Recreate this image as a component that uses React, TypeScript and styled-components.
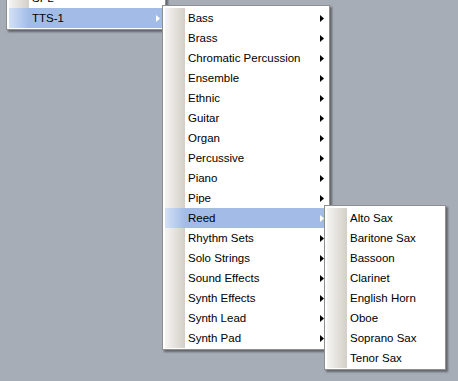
import React from 'react'
import styled, { createGlobalStyle, css } from 'styled-components'

const GlobalStyle = createGlobalStyle`
  html, body {
    margin: 0;
    padding: 0;
    background: #a7adb7;
  }
  body {
    font-family: "Liberation Sans", Arial, sans-serif;
    font-size: 11.5px;
    color: #000;
  }
`

const Desktop = styled.div`
  position: relative;
  width: 458px;
  height: 381px;
  overflow: hidden;
  background: #a7adb7;
`

const Menu = styled.div<{ $left: number; $top: number; $width: number }>`
  position: absolute;
  left: ${(p) => p.$left}px;
  top: ${(p) => p.$top}px;
  width: ${(p) => p.$width}px;
  box-sizing: border-box;
  display: flex;
  flex-direction: column;
  padding: 2px 2px 1px 2px;
  background: #fff;
  border: 1px solid #8f8f8f;
  box-shadow: 2px 2px 2px rgba(0, 0, 0, 0.42);
`

const Item = styled.div<{ $active?: boolean }>`
  display: flex;
  align-items: center;
  height: 20px;

  ${(p) =>
    p.$active &&
    css`
      background: #a2bce7;
    `}
`

const Gutter = styled.div<{ $active?: boolean }>`
  align-self: stretch;
  width: 20px;
  flex: none;
  background: linear-gradient(to right, #f6f5f2, #d3cfc8);

  ${(p) =>
    p.$active &&
    css`
      background: linear-gradient(to right, #d3e1f6, #a2bce7);
    `}
`

const Label = styled.span`
  flex: 1;
  padding-left: 3px;
  white-space: nowrap;
  line-height: 20px;
`

const Arrow = styled.svg`
  flex: none;
  width: 4px;
  height: 7px;
  margin-right: 3px;
`

type Entry = { label: string; sub?: boolean; active?: boolean }

const MenuItem: React.FC<Entry> = ({ label, sub, active }) => (
  <Item $active={active}>
    <Gutter $active={active} />
    <Label>{label}</Label>
    {sub && (
      <Arrow viewBox="0 0 4 7">
        <path d="M0 0 L4 3.5 L0 7 Z" fill={active ? '#fff' : '#000'} />
      </Arrow>
    )}
  </Item>
)

const rootItems: Entry[] = [
  { label: 'SPL', sub: false },
  { label: 'TTS-1', sub: true, active: true },
]

const categories = [
  'Bass',
  'Brass',
  'Chromatic Percussion',
  'Ensemble',
  'Ethnic',
  'Guitar',
  'Organ',
  'Percussive',
  'Piano',
  'Pipe',
  'Reed',
  'Rhythm Sets',
  'Solo Strings',
  'Sound Effects',
  'Synth Effects',
  'Synth Lead',
  'Synth Pad',
]

const reeds = [
  'Alto Sax',
  'Baritone Sax',
  'Bassoon',
  'Clarinet',
  'English Horn',
  'Oboe',
  'Soprano Sax',
  'Tenor Sax',
]

export default function App() {
  return (
    <>
      <GlobalStyle />
      <Desktop>
        <Menu $left={6} $top={-15} $width={160}>
          {rootItems.map((it) => (
            <MenuItem key={it.label} {...it} />
          ))}
        </Menu>
        <Menu $left={162} $top={5} $width={168}>
          {categories.map((c) => (
            <MenuItem key={c} label={c} sub active={c === 'Reed'} />
          ))}
        </Menu>
        <Menu $left={324} $top={205} $width={122}>
          {reeds.map((r) => (
            <MenuItem key={r} label={r} />
          ))}
        </Menu>
      </Desktop>
    </>
  )
}
